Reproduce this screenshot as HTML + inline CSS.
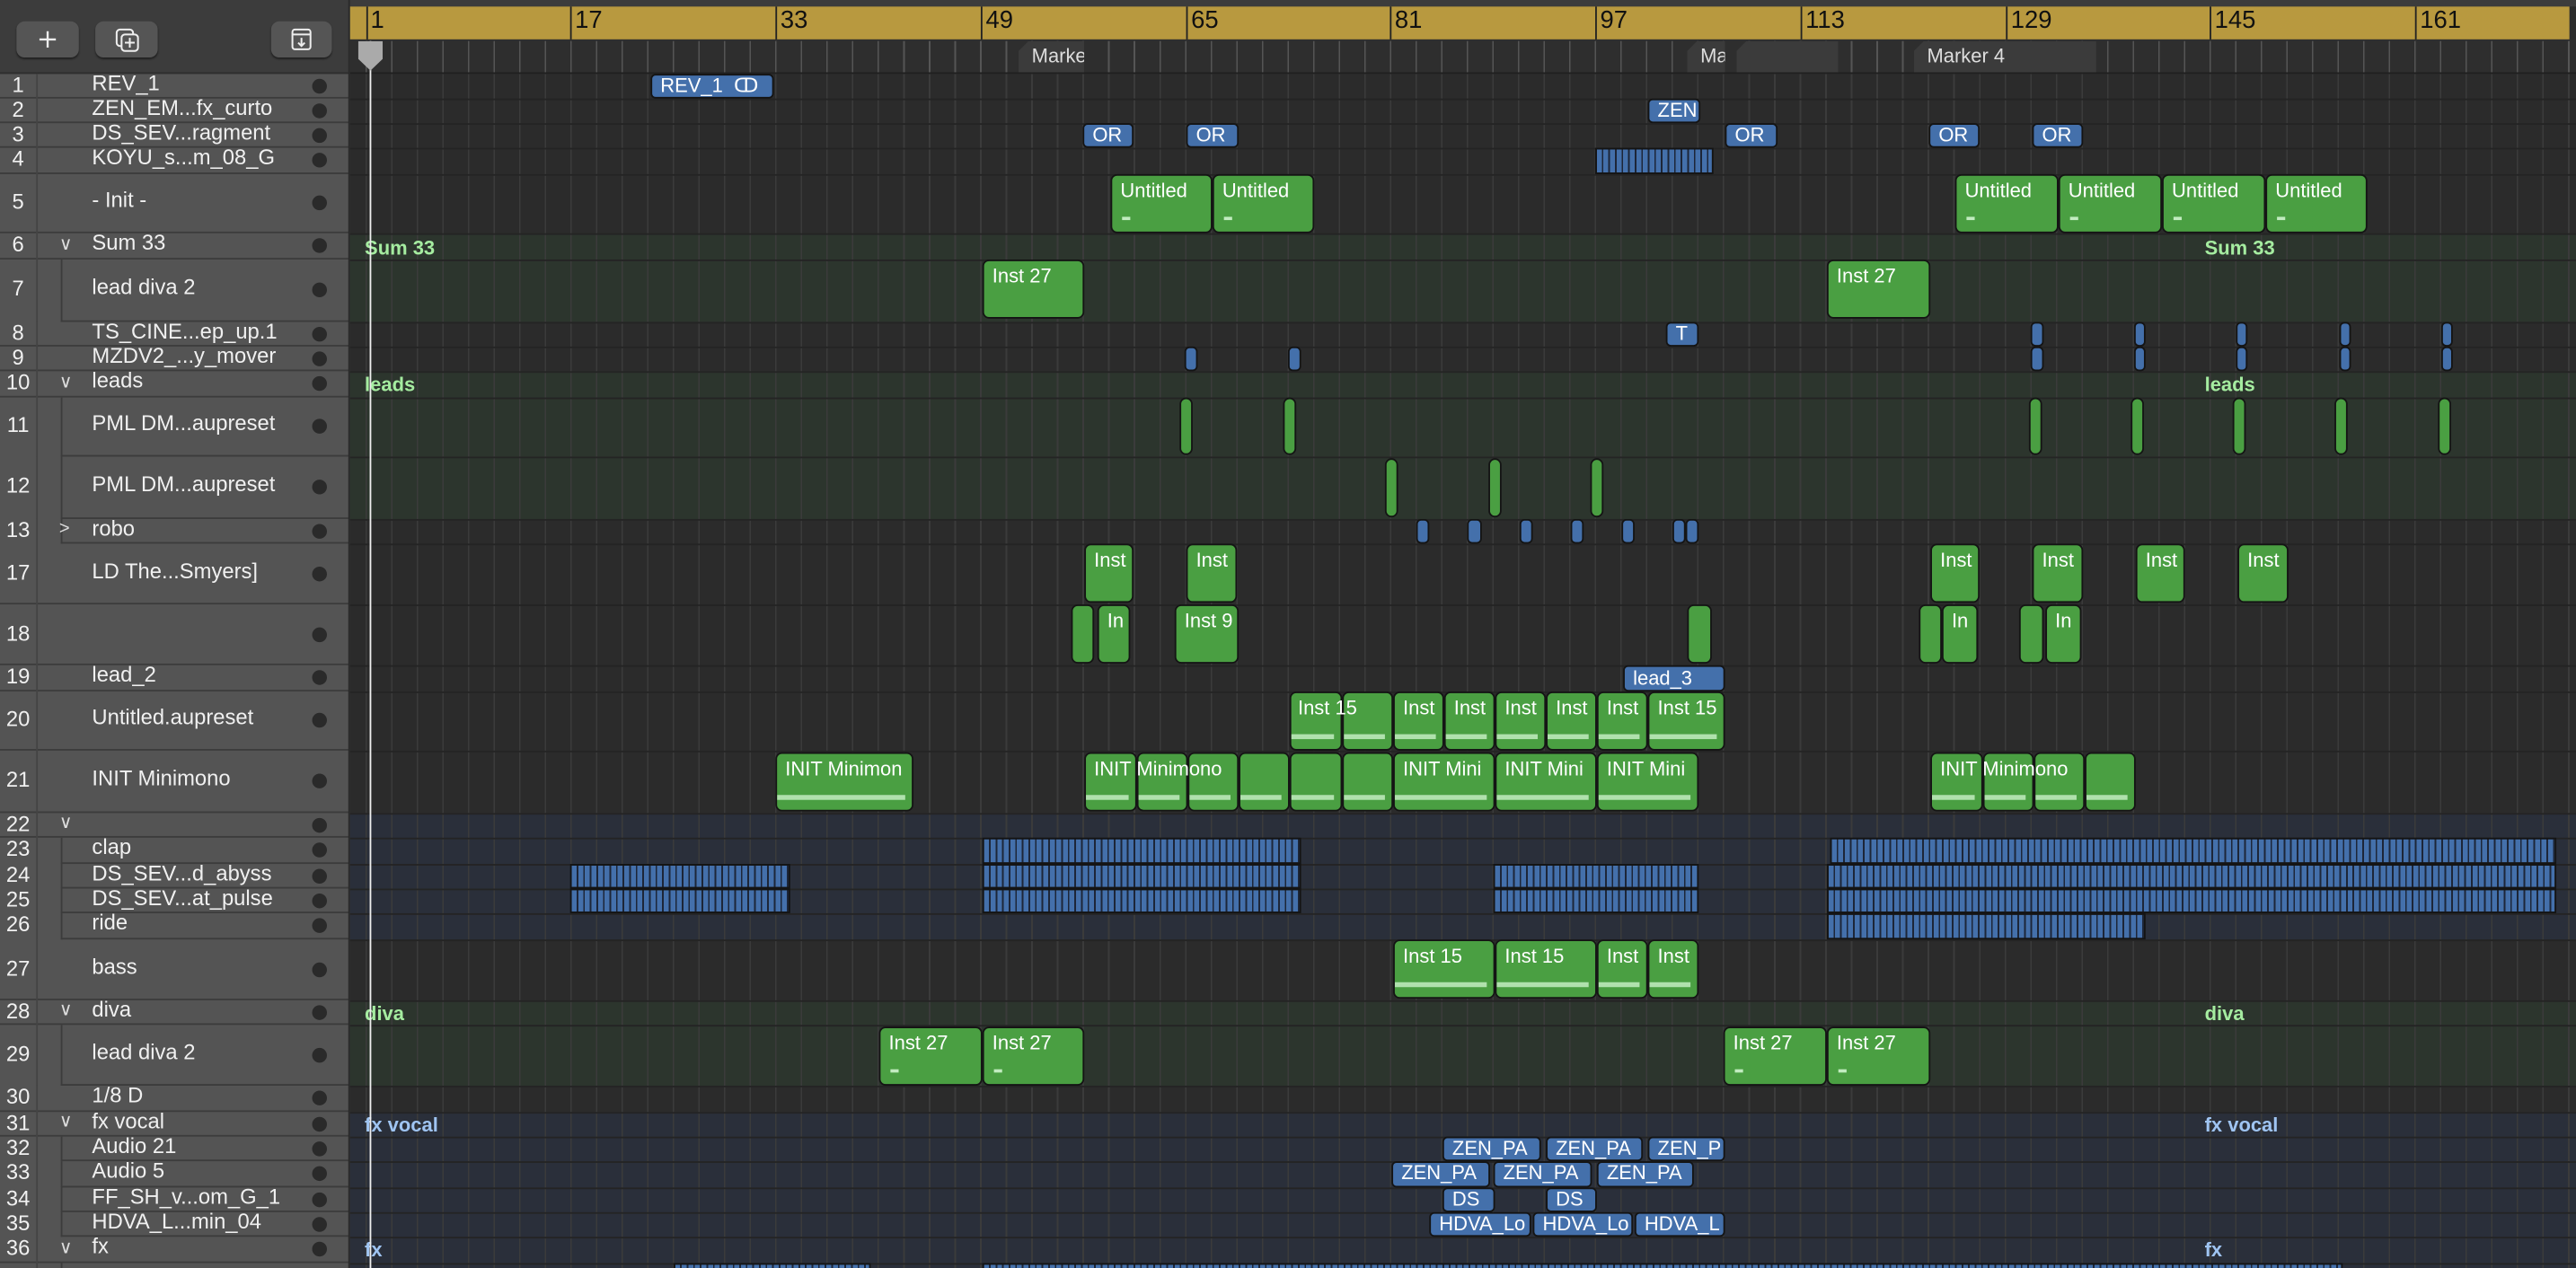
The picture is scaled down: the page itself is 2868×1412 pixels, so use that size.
<!DOCTYPE html>
<html><head><meta charset="utf-8"><style>
*{margin:0;padding:0;box-sizing:border-box}
html,body{width:2868px;height:1412px;overflow:hidden;background:#2b2b2b}
#c{position:absolute;left:0;top:0;width:1568px;height:772px;transform:scale(1.82908,1.82902);transform-origin:0 0;font-family:"Liberation Sans",sans-serif;overflow:hidden}
.a{position:absolute}
#tl{left:0;top:0;width:213px;height:772px;background:#545454}
#hd{left:0;top:0;width:213px;height:45px;background:#3c3c3c;border-bottom:1px solid #2e2e2e}
.btn{position:absolute;top:13px;height:22px;background:#555;border-radius:5px;box-shadow:0 1px 1px #222}
.r{position:absolute;left:0;width:213px;color:#f0f0f0;font-size:13px}
.r .sep{position:absolute;left:0;right:0;bottom:0;height:1px;background:#3c3c3c}
.r .num{position:absolute;left:0;top:-1px;width:22px;text-align:center;font-size:13px}
.r .nm{position:absolute;left:56px;top:-2px;white-space:nowrap;z-index:1}
.r .dot{position:absolute;left:190px;width:9px;height:9px;border-radius:50%;background:#2a2a2a}
.r .ch{position:absolute;left:36px;top:-1px;font-size:11px;color:#ddd}
.r .vs{position:absolute;left:22px;top:0;bottom:0;width:1px;background:#444}
.r.ns .nb{position:absolute;left:37px;top:0;bottom:0;width:1px;background:#3c3c3c}
.r.ns .sep{left:37px}
#ar{left:213px;top:45px;width:1355px;height:727px;background:#2b2b2b}
.bg{position:absolute;left:213px;width:1355px}
#grid{left:213px;top:25px;width:1355px;height:747px;background:repeating-linear-gradient(90deg,transparent 0 9.4px,#3b3b3b 9.4px 10.3px,transparent 10.3px 15.59px)}
.hl{position:absolute;left:213px;width:1355px;height:1px;background:#242424}
#ru{left:213px;top:4px;width:1351px;height:20px;background:#b8993f}
.bar{position:absolute;top:0;height:20px;border-left:1px solid #222;font-size:15px;color:#111;padding-left:2px;line-height:17px}
#mk{left:213px;top:24px;width:1355px;height:21px;background:#2e2e2e;border-bottom:1px solid #202020}
.mt{position:absolute;top:25px;height:19px;background:#3b3b3b;color:#ddd;font-size:12px;line-height:19px;padding-left:8px;overflow:hidden;white-space:nowrap;clip-path:polygon(6px 0,100% 0,100% 100%,0 100%,0 6px)}
.g{position:absolute;background:#4a9f42;border:1px solid #141414;border-radius:4px;color:#fff;font-size:12px;padding:2px 0 0 5px;white-space:nowrap;overflow:hidden}
.b{position:absolute;background:#4470ab;border:1px solid #141414;border-radius:3px;color:#fff;font-size:12px;line-height:13px;padding-left:5px;white-space:nowrap;overflow:hidden}
.s{position:absolute;border:1px solid #141414;background:repeating-linear-gradient(90deg,#4470ab 0 3px,#1d2638 3px 4px)}
.n::after{content:"";position:absolute;left:0;right:4px;bottom:6px;height:3px;background:#c2ecc0;opacity:.85}
.d::after{content:"";position:absolute;left:6px;width:5px;bottom:7px;height:2px;background:#c2ecc0}
.fl{position:absolute;font-size:12px;font-weight:bold;color:#a5eca0}
.fb{color:#9fc4f2}
.ov{position:absolute;color:#fff;font-size:12px;z-index:3;white-space:nowrap}
</style></head><body><div id="c">
<div class="a" id="ar"></div>
<div class="bg" style="top:142px;height:54px;background:#2c352d"></div>
<div class="bg" style="top:226px;height:90px;background:#2c352d"></div>
<div class="bg" style="top:495px;height:77px;background:#2a2f3a"></div>
<div class="bg" style="top:609px;height:52px;background:#2c352d"></div>
<div class="bg" style="top:677px;height:95px;background:#2a2f3a"></div>
<div class="a" id="grid"></div>
<div class="hl" style="top:60px"></div><div class="hl" style="top:75px"></div><div class="hl" style="top:90px"></div><div class="hl" style="top:106px"></div><div class="hl" style="top:142px"></div><div class="hl" style="top:158px"></div><div class="hl" style="top:196px"></div><div class="hl" style="top:211px"></div><div class="hl" style="top:226px"></div><div class="hl" style="top:242px"></div><div class="hl" style="top:278px"></div><div class="hl" style="top:316px"></div><div class="hl" style="top:331px"></div><div class="hl" style="top:368px"></div><div class="hl" style="top:405px"></div><div class="hl" style="top:421px"></div><div class="hl" style="top:457px"></div><div class="hl" style="top:495px"></div><div class="hl" style="top:510px"></div><div class="hl" style="top:526px"></div><div class="hl" style="top:541px"></div><div class="hl" style="top:556px"></div><div class="hl" style="top:572px"></div><div class="hl" style="top:609px"></div><div class="hl" style="top:624px"></div><div class="hl" style="top:661px"></div><div class="hl" style="top:677px"></div><div class="hl" style="top:692px"></div><div class="hl" style="top:707px"></div><div class="hl" style="top:723px"></div><div class="hl" style="top:738px"></div><div class="hl" style="top:753px"></div><div class="hl" style="top:769px"></div>

<div class="a" style="left:213px;top:0;width:1355px;height:4px;background:#3c3c3c"></div>
<div class="a" id="ru">
<div class="bar" style="left:9.5px">1</div><div class="bar" style="left:134px">17</div><div class="bar" style="left:259px">33</div><div class="bar" style="left:384px">49</div><div class="bar" style="left:509px">65</div><div class="bar" style="left:633px">81</div><div class="bar" style="left:758px">97</div><div class="bar" style="left:883px">113</div><div class="bar" style="left:1008px">129</div><div class="bar" style="left:1132px">145</div><div class="bar" style="left:1257px">161</div>
</div>
<div class="a" id="mk"></div>
<div class="a" style="left:213px;top:25px;width:1355px;height:19px;background:repeating-linear-gradient(90deg,transparent 0 9.4px,#555 9.4px 10.3px,transparent 10.3px 15.59px)"></div>
<div class="mt" style="left:620px;width:40px">Marker</div>
<div class="mt" style="left:1027px;width:23px">Ma</div>
<div class="mt" style="left:1057px;width:62px"></div>
<div class="mt" style="left:1165px;width:111px">Marker 4</div>

<div class="fl" style="left:222px;top:144px">Sum 33</div><div class="fl" style="left:1342px;top:144px">Sum 33</div>
<div class="fl" style="left:222px;top:227px">leads</div><div class="fl" style="left:1342px;top:227px">leads</div>
<div class="fl" style="left:222px;top:610px">diva</div><div class="fl" style="left:1342px;top:610px">diva</div>
<div class="fl fb" style="left:222px;top:678px">fx vocal</div><div class="fl fb" style="left:1342px;top:678px">fx vocal</div>
<div class="fl fb" style="left:222px;top:754px">fx</div><div class="fl fb" style="left:1342px;top:754px">fx</div>

<div class="b" style="left:396px;top:45px;width:75px;height:15px">REV_1 &nbsp;ↀ</div>
<div class="b" style="left:1003px;top:60px;width:32px;height:15px">ZEN</div>
<div class="b" style="left:659px;top:75px;width:31px;height:15px">OR</div><div class="b" style="left:722px;top:75px;width:32px;height:15px">OR</div><div class="b" style="left:1050px;top:75px;width:32px;height:15px">OR</div><div class="b" style="left:1174px;top:75px;width:31px;height:15px">OR</div><div class="b" style="left:1237px;top:75px;width:31px;height:15px">OR</div>
<div class="s" style="left:971px;top:90px;width:72px;height:16px"></div>
<div class="g d" style="left:676px;top:106px;width:62px;height:36px">Untitled</div><div class="g d" style="left:738px;top:106px;width:62px;height:36px">Untitled</div>
<div class="g d" style="left:1190px;top:106px;width:63px;height:36px">Untitled</div><div class="g d" style="left:1253px;top:106px;width:63px;height:36px">Untitled</div><div class="g d" style="left:1316px;top:106px;width:63px;height:36px">Untitled</div><div class="g d" style="left:1379px;top:106px;width:62px;height:36px">Untitled</div>
<div class="g" style="left:598px;top:158px;width:62px;height:36px">Inst 27</div><div class="g" style="left:1112px;top:158px;width:63px;height:36px">Inst 27</div>
<div class="b" style="left:1014px;top:196px;width:20px;height:15px">T</div>
<div class="b" style="left:721px;top:211px;width:8px;height:15px"></div><div class="b" style="left:784px;top:211px;width:8px;height:15px"></div><div class="b" style="left:1236px;top:196px;width:8px;height:15px"></div><div class="b" style="left:1299px;top:196px;width:7px;height:15px"></div><div class="b" style="left:1361px;top:196px;width:7px;height:15px"></div><div class="b" style="left:1424px;top:196px;width:7px;height:15px"></div><div class="b" style="left:1486px;top:196px;width:7px;height:15px"></div>
<div class="b" style="left:1236px;top:211px;width:8px;height:15px"></div><div class="b" style="left:1299px;top:211px;width:7px;height:15px"></div><div class="b" style="left:1361px;top:211px;width:7px;height:15px"></div><div class="b" style="left:1424px;top:211px;width:7px;height:15px"></div><div class="b" style="left:1486px;top:211px;width:7px;height:15px"></div>
<div class="g" style="left:718px;top:242px;width:8px;height:35px"></div><div class="g" style="left:781px;top:242px;width:8px;height:35px"></div><div class="g" style="left:1235px;top:242px;width:8px;height:35px"></div><div class="g" style="left:1297px;top:242px;width:8px;height:35px"></div><div class="g" style="left:1359px;top:242px;width:8px;height:35px"></div><div class="g" style="left:1421px;top:242px;width:8px;height:35px"></div><div class="g" style="left:1484px;top:242px;width:8px;height:35px"></div>
<div class="g" style="left:843px;top:279px;width:8px;height:36px"></div><div class="g" style="left:906px;top:279px;width:8px;height:36px"></div><div class="g" style="left:968px;top:279px;width:8px;height:36px"></div>
<div class="b" style="left:862px;top:316px;width:8px;height:15px"></div><div class="b" style="left:893px;top:316px;width:9px;height:15px"></div><div class="b" style="left:925px;top:316px;width:8px;height:15px"></div><div class="b" style="left:956px;top:316px;width:8px;height:15px"></div><div class="b" style="left:987px;top:316px;width:8px;height:15px"></div><div class="b" style="left:1018px;top:316px;width:8px;height:15px"></div><div class="b" style="left:1026px;top:316px;width:8px;height:15px"></div>
<div class="g" style="left:660px;top:331px;width:30px;height:36px">Inst</div><div class="g" style="left:722px;top:331px;width:31px;height:36px">Inst</div><div class="g" style="left:1175px;top:331px;width:30px;height:36px">Inst</div><div class="g" style="left:1237px;top:331px;width:31px;height:36px">Inst</div><div class="g" style="left:1300px;top:331px;width:30px;height:36px">Inst</div><div class="g" style="left:1362px;top:331px;width:31px;height:36px">Inst</div>
<div class="g" style="left:652px;top:368px;width:14px;height:36px"></div><div class="g" style="left:668px;top:368px;width:20px;height:36px">In</div><div class="g" style="left:715px;top:368px;width:39px;height:36px">Inst 9</div><div class="g" style="left:1027px;top:368px;width:15px;height:36px"></div><div class="g" style="left:1168px;top:368px;width:14px;height:36px"></div><div class="g" style="left:1182px;top:368px;width:22px;height:36px">In</div><div class="g" style="left:1229px;top:368px;width:15px;height:36px"></div><div class="g" style="left:1245px;top:368px;width:22px;height:36px">In</div>
<div class="b" style="left:988px;top:405px;width:62px;height:16px;line-height:15px">lead_3</div>
<div class="g n" style="left:785px;top:421px;width:32px;height:36px"></div><div class="g n" style="left:817px;top:421px;width:31px;height:36px"></div><div class="ov" style="left:790px;top:424px">Inst 15</div><div class="g n" style="left:848px;top:421px;width:31px;height:36px">Inst</div><div class="g n" style="left:879px;top:421px;width:31px;height:36px">Inst</div><div class="g n" style="left:910px;top:421px;width:31px;height:36px">Inst</div><div class="g n" style="left:941px;top:421px;width:31px;height:36px">Inst</div><div class="g n" style="left:972px;top:421px;width:31px;height:36px">Inst</div><div class="g n" style="left:1003px;top:421px;width:47px;height:36px">Inst 15</div>
<div class="g n" style="left:472px;top:458px;width:84px;height:36px">INIT Minimon</div>
<div class="g n" style="left:660px;top:458px;width:32px;height:36px"></div><div class="g n" style="left:692px;top:458px;width:31px;height:36px"></div><div class="g n" style="left:723px;top:458px;width:31px;height:36px"></div><div class="g n" style="left:754px;top:458px;width:31px;height:36px"></div><div class="g n" style="left:785px;top:458px;width:32px;height:36px"></div><div class="g n" style="left:817px;top:458px;width:31px;height:36px"></div><div class="ov" style="left:666px;top:461px">INIT Minimono</div>
<div class="g n" style="left:848px;top:458px;width:62px;height:36px">INIT Mini</div><div class="g n" style="left:910px;top:458px;width:62px;height:36px">INIT Mini</div><div class="g n" style="left:972px;top:458px;width:62px;height:36px">INIT Mini</div>
<div class="g n" style="left:1175px;top:458px;width:32px;height:36px"></div><div class="g n" style="left:1207px;top:458px;width:31px;height:36px"></div><div class="g n" style="left:1238px;top:458px;width:31px;height:36px"></div><div class="g n" style="left:1269px;top:458px;width:31px;height:36px"></div><div class="ov" style="left:1181px;top:461px">INIT Minimono</div>
<div class="s" style="left:598px;top:510px;width:194px;height:16px"></div><div class="s" style="left:1114px;top:510px;width:442px;height:16px"></div>
<div class="s" style="left:347px;top:526px;width:134px;height:15px"></div><div class="s" style="left:598px;top:526px;width:194px;height:15px"></div><div class="s" style="left:909px;top:526px;width:125px;height:15px"></div><div class="s" style="left:1112px;top:526px;width:444px;height:15px"></div>
<div class="s" style="left:347px;top:541px;width:134px;height:15px"></div><div class="s" style="left:598px;top:541px;width:194px;height:15px"></div><div class="s" style="left:909px;top:541px;width:125px;height:15px"></div><div class="s" style="left:1112px;top:541px;width:444px;height:15px"></div>
<div class="s" style="left:1112px;top:556px;width:194px;height:16px"></div>
<div class="g n" style="left:848px;top:572px;width:62px;height:36px">Inst 15</div><div class="g n" style="left:910px;top:572px;width:62px;height:36px">Inst 15</div><div class="g n" style="left:972px;top:572px;width:31px;height:36px">Inst</div><div class="g n" style="left:1003px;top:572px;width:31px;height:36px">Inst</div>
<div class="g d" style="left:535px;top:625px;width:63px;height:36px">Inst 27</div><div class="g d" style="left:598px;top:625px;width:62px;height:36px">Inst 27</div><div class="g d" style="left:1049px;top:625px;width:63px;height:36px">Inst 27</div><div class="g d" style="left:1112px;top:625px;width:63px;height:36px">Inst 27</div>
<div class="b" style="left:878px;top:692px;width:60px;height:15px">ZEN_PA</div><div class="b" style="left:941px;top:692px;width:59px;height:15px">ZEN_PA</div><div class="b" style="left:1003px;top:692px;width:47px;height:15px">ZEN_P</div>
<div class="b" style="left:847px;top:707px;width:60px;height:16px">ZEN_PA</div><div class="b" style="left:909px;top:707px;width:60px;height:16px">ZEN_PA</div><div class="b" style="left:972px;top:707px;width:59px;height:16px">ZEN_PA</div>
<div class="b" style="left:878px;top:723px;width:32px;height:15px">DS</div><div class="b" style="left:941px;top:723px;width:31px;height:15px">DS</div>
<div class="b" style="left:870px;top:738px;width:62px;height:15px">HDVA_Lo</div><div class="b" style="left:933px;top:738px;width:61px;height:15px">HDVA_Lo</div><div class="b" style="left:995px;top:738px;width:55px;height:15px">HDVA_L</div>
<div class="s" style="left:410px;top:769px;width:120px;height:5px"></div><div class="s" style="left:598px;top:769px;width:828px;height:5px"></div>

<div class="a" style="left:225px;top:25px;width:1px;height:747px;background:#eee"></div>
<div class="a" style="left:218px;top:25px;width:15px;height:18px;background:#aaa;clip-path:polygon(0 0,100% 0,100% 60%,50% 100%,0 60%)"></div>

<div class="a" id="tl"></div>
<div class="a" id="hd">
<div class="btn" style="left:10px;width:38px"><svg width="38" height="22"><path d="M19 6v10M14 11h10" stroke="#eee" stroke-width="1.3"/></svg></div>
<div class="btn" style="left:58px;width:38px"><svg width="38" height="22"><rect x="13" y="5" width="10" height="10" rx="2" fill="none" stroke="#eee" stroke-width="1.1"/><rect x="16" y="8" width="10" height="10" rx="2" fill="#555" stroke="#eee" stroke-width="1.1"/><path d="M21 10v6M18 13h6" stroke="#eee" stroke-width="1.1"/></svg></div>
<div class="btn" style="left:165px;width:37px"><svg width="37" height="22"><rect x="13" y="5" width="11" height="12" rx="1.5" fill="none" stroke="#eee" stroke-width="1.1"/><path d="M13 8h11M18.5 10v5M16.5 13l2 2 2-2" stroke="#eee" stroke-width="1.1" fill="none"/></svg></div>
</div>

<div class="r" style="top:45px;height:15px;line-height:15px"><span class="sep"></span><span class="vs"></span><span class="num">1</span><span class="nm">REV_1</span><span class="dot" style="top:3px"></span></div>
<div class="r" style="top:60px;height:15px;line-height:15px"><span class="sep"></span><span class="vs"></span><span class="num">2</span><span class="nm">ZEN_EM...fx_curto</span><span class="dot" style="top:3px"></span></div>
<div class="r" style="top:75px;height:15px;line-height:15px"><span class="sep"></span><span class="vs"></span><span class="num">3</span><span class="nm">DS_SEV...ragment</span><span class="dot" style="top:3px"></span></div>
<div class="r" style="top:90px;height:16px;line-height:16px"><span class="sep"></span><span class="vs"></span><span class="num">4</span><span class="nm">KOYU_s...m_08_G</span><span class="dot" style="top:3px"></span></div>
<div class="r" style="top:106px;height:36px;line-height:36px"><span class="sep"></span><span class="vs"></span><span class="num">5</span><span class="nm">- Init -</span><span class="dot" style="top:13px"></span></div>
<div class="r" style="top:142px;height:16px;line-height:16px"><span class="sep"></span><span class="vs"></span><span class="num">6</span><span class="ch">&#8744;</span><span class="nm">Sum 33</span><span class="dot" style="top:3px"></span></div>
<div class="r ns" style="top:158px;height:38px;line-height:38px"><span class="sep"></span><span class="vs"></span><span class="nb"></span><span class="num">7</span><span class="nm">lead diva 2</span><span class="dot" style="top:14px"></span></div>
<div class="r" style="top:196px;height:15px;line-height:15px"><span class="sep"></span><span class="vs"></span><span class="num">8</span><span class="nm">TS_CINE...ep_up.1</span><span class="dot" style="top:3px"></span></div>
<div class="r" style="top:211px;height:15px;line-height:15px"><span class="sep"></span><span class="vs"></span><span class="num">9</span><span class="nm">MZDV2_...y_mover</span><span class="dot" style="top:3px"></span></div>
<div class="r" style="top:226px;height:16px;line-height:16px"><span class="sep"></span><span class="vs"></span><span class="num">10</span><span class="ch">&#8744;</span><span class="nm">leads</span><span class="dot" style="top:3px"></span></div>
<div class="r ns" style="top:242px;height:36px;line-height:36px"><span class="sep"></span><span class="vs"></span><span class="nb"></span><span class="num">11</span><span class="nm">PML DM...aupreset</span><span class="dot" style="top:13px"></span></div>
<div class="r ns" style="top:278px;height:38px;line-height:38px"><span class="sep"></span><span class="vs"></span><span class="nb"></span><span class="num">12</span><span class="nm">PML DM...aupreset</span><span class="dot" style="top:14px"></span></div>
<div class="r ns" style="top:316px;height:15px;line-height:15px"><span class="sep"></span><span class="vs"></span><span class="nb"></span><span class="num">13</span><span class="ch">&gt;</span><span class="nm">robo</span><span class="dot" style="top:3px"></span></div>
<div class="r" style="top:331px;height:37px;line-height:37px"><span class="sep"></span><span class="vs"></span><span class="num">17</span><span class="nm">LD The...Smyers]</span><span class="dot" style="top:14px"></span></div>
<div class="r" style="top:368px;height:37px;line-height:37px"><span class="sep"></span><span class="vs"></span><span class="num">18</span><span class="dot" style="top:14px"></span></div>
<div class="r" style="top:405px;height:16px;line-height:16px"><span class="sep"></span><span class="vs"></span><span class="num">19</span><span class="nm">lead_2</span><span class="dot" style="top:3px"></span></div>
<div class="r" style="top:421px;height:36px;line-height:36px"><span class="sep"></span><span class="vs"></span><span class="num">20</span><span class="nm">Untitled.aupreset</span><span class="dot" style="top:13px"></span></div>
<div class="r" style="top:457px;height:38px;line-height:38px"><span class="sep"></span><span class="vs"></span><span class="num">21</span><span class="nm">INIT Minimono</span><span class="dot" style="top:14px"></span></div>
<div class="r" style="top:495px;height:15px;line-height:15px"><span class="sep"></span><span class="vs"></span><span class="num">22</span><span class="ch">&#8744;</span><span class="dot" style="top:3px"></span></div>
<div class="r ns" style="top:510px;height:16px;line-height:16px"><span class="sep"></span><span class="vs"></span><span class="nb"></span><span class="num">23</span><span class="nm">clap</span><span class="dot" style="top:3px"></span></div>
<div class="r ns" style="top:526px;height:15px;line-height:15px"><span class="sep"></span><span class="vs"></span><span class="nb"></span><span class="num">24</span><span class="nm">DS_SEV...d_abyss</span><span class="dot" style="top:3px"></span></div>
<div class="r ns" style="top:541px;height:15px;line-height:15px"><span class="sep"></span><span class="vs"></span><span class="nb"></span><span class="num">25</span><span class="nm">DS_SEV...at_pulse</span><span class="dot" style="top:3px"></span></div>
<div class="r ns" style="top:556px;height:16px;line-height:16px"><span class="sep"></span><span class="vs"></span><span class="nb"></span><span class="num">26</span><span class="nm">ride</span><span class="dot" style="top:3px"></span></div>
<div class="r" style="top:572px;height:37px;line-height:37px"><span class="sep"></span><span class="vs"></span><span class="num">27</span><span class="nm">bass</span><span class="dot" style="top:14px"></span></div>
<div class="r" style="top:609px;height:15px;line-height:15px"><span class="sep"></span><span class="vs"></span><span class="num">28</span><span class="ch">&#8744;</span><span class="nm">diva</span><span class="dot" style="top:3px"></span></div>
<div class="r ns" style="top:624px;height:37px;line-height:37px"><span class="sep"></span><span class="vs"></span><span class="nb"></span><span class="num">29</span><span class="nm">lead diva 2</span><span class="dot" style="top:14px"></span></div>
<div class="r" style="top:661px;height:16px;line-height:16px"><span class="sep"></span><span class="vs"></span><span class="num">30</span><span class="nm">1/8 D</span><span class="dot" style="top:3px"></span></div>
<div class="r" style="top:677px;height:15px;line-height:15px"><span class="sep"></span><span class="vs"></span><span class="num">31</span><span class="ch">&#8744;</span><span class="nm">fx vocal</span><span class="dot" style="top:3px"></span></div>
<div class="r ns" style="top:692px;height:15px;line-height:15px"><span class="sep"></span><span class="vs"></span><span class="nb"></span><span class="num">32</span><span class="nm">Audio 21</span><span class="dot" style="top:3px"></span></div>
<div class="r ns" style="top:707px;height:16px;line-height:16px"><span class="sep"></span><span class="vs"></span><span class="nb"></span><span class="num">33</span><span class="nm">Audio 5</span><span class="dot" style="top:3px"></span></div>
<div class="r ns" style="top:723px;height:15px;line-height:15px"><span class="sep"></span><span class="vs"></span><span class="nb"></span><span class="num">34</span><span class="nm">FF_SH_v...om_G_1</span><span class="dot" style="top:3px"></span></div>
<div class="r ns" style="top:738px;height:15px;line-height:15px"><span class="sep"></span><span class="vs"></span><span class="nb"></span><span class="num">35</span><span class="nm">HDVA_L...min_04</span><span class="dot" style="top:3px"></span></div>
<div class="r" style="top:753px;height:16px;line-height:16px"><span class="sep"></span><span class="vs"></span><span class="num">36</span><span class="ch">&#8744;</span><span class="nm">fx</span><span class="dot" style="top:3px"></span></div>
<div class="r ns" style="top:769px;height:10px"><span class="vs"></span><span class="nb"></span></div>
<div class="a" style="left:212px;top:0;width:1px;height:772px;background:#2a2a2a"></div>
</div></body></html>
